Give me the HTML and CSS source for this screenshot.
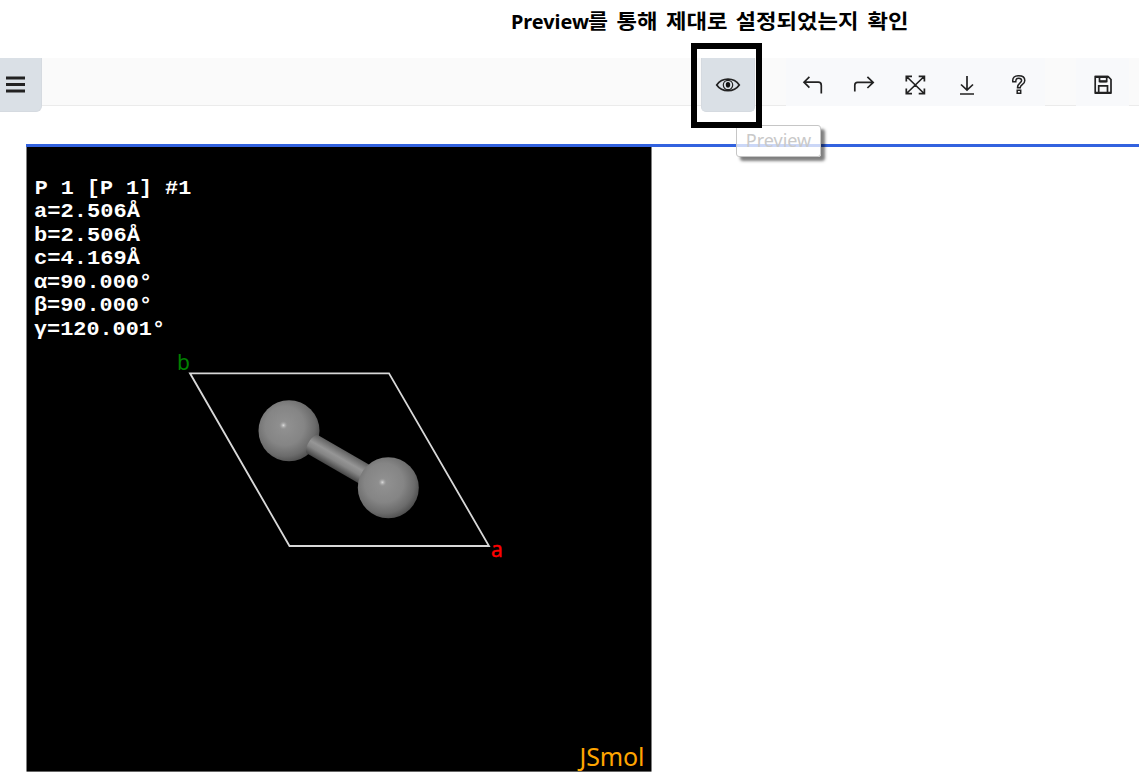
FILE: index.html
```html
<!DOCTYPE html>
<html lang="ko">
<head>
<meta charset="utf-8">
<title>Preview</title>
<link rel="stylesheet" href="styles.css">
</head>
<body>
<div class="page">
  <header class="caption">
    <svg width="400" height="36" viewBox="510 4 400 36"><text y="28.5"><tspan class="latin" x="511" textLength="78" lengthAdjust="spacingAndGlyphs">Preview</tspan><tspan x="588" textLength="20" lengthAdjust="spacingAndGlyphs">를</tspan> <tspan x="616.5" textLength="41" lengthAdjust="spacingAndGlyphs">통해</tspan> <tspan x="666" textLength="61.5" lengthAdjust="spacingAndGlyphs">제대로</tspan> <tspan x="735.5" textLength="123" lengthAdjust="spacingAndGlyphs">설정되었는지</tspan> <tspan x="867.5" textLength="41" lengthAdjust="spacingAndGlyphs">확인</tspan></text></svg>
  </header>
  <nav class="toolbar">
    <button class="tool menu active" aria-label="Menu">
      <svg width="20" height="19" viewBox="0 0 20 19"><path d="M0 3h19M0 9.5h19M0 16h19" stroke-width="3"/></svg>
    </button>
    <div class="preview">
      <button class="tool eye active" aria-label="Preview">
        <svg width="26" height="18" viewBox="0 0 26 18"><path d="M1.7 9C7 1.2 19 1.2 24.3 9 19 16.6 7 16.6 1.7 9Z"/><circle cx="13" cy="9" r="4.7" stroke-width="1.2"/><ellipse cx="13" cy="8.7" rx="2.2" ry="2.8" fill="#111" stroke="none"/></svg>
      </button>
      <span class="highlight"></span>
      <span class="tooltip">Preview</span>
    </div>
    <div class="group">
      <button class="tool" aria-label="Undo"><svg width="22" height="22" viewBox="0 0 22 22"><path d="m8.4 2.8-5.4 5.4 5.4 5.4M3.3 8.2H17.3q3 0 3 3.2v8"/></svg></button>
      <button class="tool" aria-label="Redo"><svg width="22" height="22" viewBox="0 0 22 22"><path d="m14.4 2.8 5.8 5.6-5.8 5.6M20 8.4H4.5q-2.7 0-2.7 2.7v6.4"/></svg></button>
      <button class="tool" aria-label="Fit"><svg width="22" height="22" viewBox="0 0 22 22"><path d="m2.5 2.5 17.6 17M20.1 2.5l-17.6 17M2.3 7.5V2.3H8M14.7 2.3h5.7v5.2M20.4 14.5v5.2h-5.7M8 19.7H2.3v-5.2"/></svg></button>
      <button class="tool" aria-label="Download"><svg width="22" height="22" viewBox="0 0 22 22"><path d="M11 2v13M5 10.5l6 5.6 6-5.6M4 20h14"/></svg></button>
      <button class="tool" aria-label="Help"><svg width="22" height="22" viewBox="0 0 22 22"><path d="M4.8 7.7C4.2 3.3 7 1.7 10.7 1.7c4 0 6.1 2 6.1 4.7 0 4.5-4.6 4-4.6 7.3H9.5c0-5 4.1-4.6 4.1-7.2 0-1.5-1.2-2.3-2.9-2.3-2 0-2.9 1.2-2.9 3.5ZM9.2 16.2h3.5v3.1H9.2Z" stroke-width="1.5"/></svg></button>
    </div>
    <div class="group save">
      <button class="tool" aria-label="Save"><svg width="20" height="20" viewBox="0 0 20 20"><path d="M2.2 1.7h13l2.8 2.8v13.4H2.2ZM5.7 18v-7.2h8.8V18M6.5 2v4.5h7.2V2"/><path d="M2 1.8h13M2 17.8h16M6.5 6.4h7.2" stroke-width="2.3"/></svg></button>
    </div>
  </nav>
  <main class="content">
    <svg class="viewer" width="626" height="625" viewBox="26 147 626 625">
      <defs>
        <radialGradient id="ball" cx=".43" cy=".42" r=".64"><stop offset="0" stop-color="#929292"/><stop offset=".5" stop-color="#858585"/><stop offset=".78" stop-color="#6b6b6b"/><stop offset="1" stop-color="#444"/></radialGradient>
        <radialGradient id="shine"><stop offset="0" stop-color="#ddd"/><stop offset="1" stop-color="#929292" stop-opacity="0"/></radialGradient>
        <linearGradient id="rod" x1="0" y1="0" x2="0" y2="1"><stop offset="0" stop-color="#606060"/><stop offset=".4" stop-color="#969696"/><stop offset=".65" stop-color="#858585"/><stop offset="1" stop-color="#454545"/></linearGradient>
      </defs>
      <rect x="26.5" y="147" width="625" height="624.6"/>
      <g class="cell-data">
        <text x="34.7" y="194" textLength="156.5" lengthAdjust="spacingAndGlyphs">P 1 [P 1] #1</text>
        <text x="34" y="217.3" textLength="106" lengthAdjust="spacingAndGlyphs">a=2.506Å</text>
        <text x="34" y="240.7" textLength="106" lengthAdjust="spacingAndGlyphs">b=2.506Å</text>
        <text x="34" y="264" textLength="106" lengthAdjust="spacingAndGlyphs">c=4.169Å</text>
        <text x="34" y="287.5" textLength="118" lengthAdjust="spacingAndGlyphs">α=90.000°</text>
        <text x="34" y="311" textLength="118" lengthAdjust="spacingAndGlyphs">β=90.000°</text>
        <text x="34" y="334.5" textLength="131" lengthAdjust="spacingAndGlyphs">γ=120.001°</text>
      </g>
      <path class="cell" d="M190 373.3H389L489 546H289.5Z"/>
      <circle cx="289" cy="430.7" r="30.5" fill="url(#ball)"/>
      <g transform="translate(312 444) rotate(30)">
        <path d="M0-10.7H62V10.7H0C-5 7-5-7 0-10.7Z" fill="url(#rod)"/>
      </g>
      <circle cx="388.3" cy="487.7" r="30.5" fill="url(#ball)"/>
      <circle cx="283.4" cy="425.3" r="4.5" fill="url(#shine)"/>
      <circle cx="382.4" cy="482.3" r="4.5" fill="url(#shine)"/>
      <text class="axis b" x="177" y="370" textLength="13">b</text>
      <text class="axis a" x="491" y="556.7" textLength="11.5">a</text>
      <text class="brand" x="579.5" y="766" textLength="65">JSmol</text>
    </svg>
  </main>
</div>
</body>
</html>
```
FILE: styles.css
```css
* { box-sizing: border-box; }
body { margin: 0; background: #fff; font-family: "Noto Sans", sans-serif; }
.page { width: 1139px; height: 780px; overflow: hidden; display: flex; flex-direction: column; }
.caption { height: 58px; flex: none; padding: 4px 0 0 510px; }
.caption svg { display: block; }
.caption text { font: bold 20.5px "Noto Sans CJK KR", sans-serif; fill: #000; }
.caption .latin { font-family: "Noto Sans", sans-serif; font-size: 20px; }
.toolbar { height: 48px; flex: none; display: flex; align-items: flex-start; background: #fafafa; border-bottom: 1px solid #ebebeb; }
.tool { width: 51.7px; height: 48px; padding: 5px 0 0; border: 0; background: none; display: flex; align-items: center; justify-content: center; }
.tool svg { fill: none; stroke: #222; stroke-width: 1.7; display: block; flex: none; }
.active { background: #dae0e6; border-radius: 0 0 5px 5px; height: 54px; border: 1px solid #d5dae0; border-top: 0; padding: 0; }
.menu { width: 42px; justify-content: flex-start; padding-left: 6px; border-radius: 0 0 6px 0; border-left: 0; }
.preview { position: relative; margin-left: 659px; }
.eye { width: 54px; }
.highlight { position: absolute; z-index: 2; left: -10px; top: -15px; width: 71px; height: 85px; border: 6px solid #000; }
.tooltip { position: absolute; z-index: 1; left: 35px; top: 67px; width: 85px; height: 32px; border: 1px solid #c6c6c6; border-radius: 3px; background: rgba(255,255,255,.75); color: #c9c9c9; font-size: 18px; line-height: 28px; text-align: center; box-shadow: 4px 4px 3px rgba(0,0,0,.5); }
.group { display: flex; height: 48px; width: 259px; margin-left: 31px; background: #f8f9fb; }
.save { width: 53px; margin-left: 31px; padding-left: 1.5px; }
.content { margin: 38px 0 0 26px; border-top: 3px solid #3262df; height: 636px; flex: none; }
.viewer { display: block; }
.cell-data text { font: bold 20px "Liberation Mono", monospace; fill: #fff; }
.cell { fill: none; stroke: #d8d8d8; stroke-width: 1.8; }
.axis { font: 21px "Noto Sans", sans-serif; }
.b { fill: #008000; }
.a { fill: #f00; stroke: #f00; stroke-width: .4; }
.brand { font: 25px "Noto Sans", sans-serif; fill: #ffa500; }
```
